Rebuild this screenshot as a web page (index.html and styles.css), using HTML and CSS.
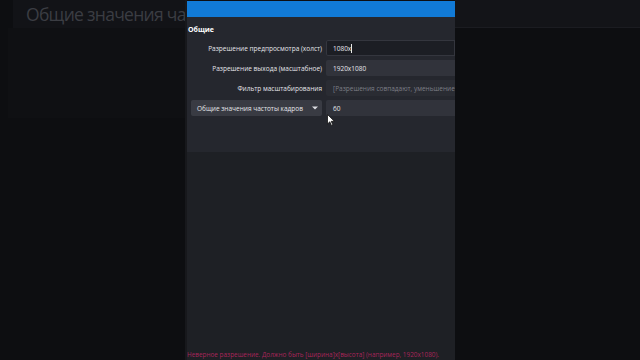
FILE: index.html
```html
<!DOCTYPE html>
<html lang="ru">
<head>
    <meta charset="UTF-8">
    <meta name="viewport" content="width=device-width, initial-scale=1.0">
    <title>Настройки видео</title>
    <link rel="stylesheet" href="styles.css">
</head>
<body>
    <div class="side left">
        <div class="side-top">
            <h1 class="ghost-title">Общие значения частоты кадров</h1>
        </div>
        <div class="side-box"></div>
    </div>

    <div class="panel">
        <div class="title-bar"></div>
        <div class="settings">
            <div class="group-title">Общие</div>
            <div class="row">
                <div class="label">Разрешение предпросмотра (холст)</div>
                <div class="field focused">1080x<span class="caret"></span></div>
            </div>
            <div class="row">
                <div class="label">Разрешение выхода (масштабное)</div>
                <div class="field">1920x1080</div>
            </div>
            <div class="row">
                <div class="label">Фильтр масштабирования</div>
                <div class="field disabled">[Разрешения совпадают, уменьшение не требуется]</div>
            </div>
            <div class="row">
                <div class="combo">
                    <span>Общие значения частоты кадров</span>
                    <svg class="arrow" width="6" height="4" viewBox="0 0 6 4"><path d="M0 0.5h6L3 3.5z" fill="#dcdde2"/></svg>
                </div>
                <div class="field">60</div>
            </div>
        </div>
        <div class="lower">
            <div class="error">Неверное разрешение. Должно быть [ширина]x[высота] (например, 1920x1080).</div>
        </div>
        <svg class="pointer" width="8" height="12" viewBox="0 0 8 12">
            <path d="M0.5 0.5v9.5l2.3-2.2 1.6 3.6 1.4-0.6-1.6-3.5h3.2z" fill="#fff" stroke="#111" stroke-width="0.8"/>
        </svg>
    </div>

    <div class="side right">
        <div class="side-top"></div>
    </div>
</body>
</html>
```

FILE: styles.css
```css
html, body {
    margin: 0;
    height: 100%;
}
body {
    background: #0d0e11;
    font-family: 'Open Sans', 'Liberation Sans', sans-serif;
    display: flex;
    overflow: hidden;
}
.side {
    width: 185px;
    flex-shrink: 0;
    overflow: hidden;
}
.left {
    display: flex;
    flex-direction: column;
}
.side-top {
    height: 28px;
    background: #131418;
    border-bottom: 1px solid #1b1c21;
    box-sizing: border-box;
}
.left .side-top {
    margin-left: 13px;
    border-bottom: none;
    background: #121317;
    overflow: hidden;
}
.ghost-title {
    margin: 0;
    padding: 2px 0 0 13px;
    font-size: 17.5px;
    font-weight: 400;
    color: #3b3d43;
    white-space: nowrap;
    letter-spacing: -0.7px;
}
.side-box {
    margin-left: 8px;
    height: 90px;
    background: #0f1013;
}
.panel {
    position: relative;
    width: 270px;
    flex-shrink: 0;
    display: flex;
    flex-direction: column;
    border-left: 2px solid #17181c;
    box-sizing: border-box;
    overflow: hidden;
}
.title-bar {
    height: 16px;
    margin-top: 1px;
    background: #117ad6;
}
.settings {
    background: #25272e;
    height: 135px;
    padding: 8px 0 0 1px;
    box-sizing: border-box;
}
.group-title {
    color: #fff;
    font-size: 7px;
    font-weight: 700;
    height: 15px;
}
.row {
    display: flex;
    align-items: center;
    height: 16px;
    margin-bottom: 4px;
    font-size: 6.5px;
    color: #e4e5ea;
}
.label {
    width: 134px;
    text-align: right;
    white-space: nowrap;
}
.field {
    margin-left: 4px;
    flex: 1;
    height: 100%;
    background: #31333b;
    border-radius: 2px 0 0 2px;
    display: flex;
    align-items: center;
    padding-left: 7px;
    white-space: nowrap;
    overflow: hidden;
}
.field.focused {
    background: #1c1e24;
    box-shadow: inset 0 0 0 1px #34363e;
}
.field.disabled {
    background: #2a2c33;
    color: #7c7e86;
}
.caret {
    display: inline-block;
    width: 1px;
    height: 9px;
    background: #e8e8e8;
}
.combo {
    margin-left: 3px;
    width: 131px;
    height: 100%;
    background: #393b43;
    border-radius: 2px;
    display: flex;
    align-items: center;
    justify-content: space-between;
    padding: 0 4px 0 6px;
    box-sizing: border-box;
    white-space: nowrap;
}
.lower {
    flex: 1;
    background: #1e2025;
    display: flex;
    flex-direction: column;
    justify-content: flex-end;
}
.error {
    color: #a8255a;
    font-size: 6.4px;
    white-space: nowrap;
    padding-bottom: 1px;
}
.pointer {
    position: absolute;
    left: 140px;
    top: 114px;
}
```
